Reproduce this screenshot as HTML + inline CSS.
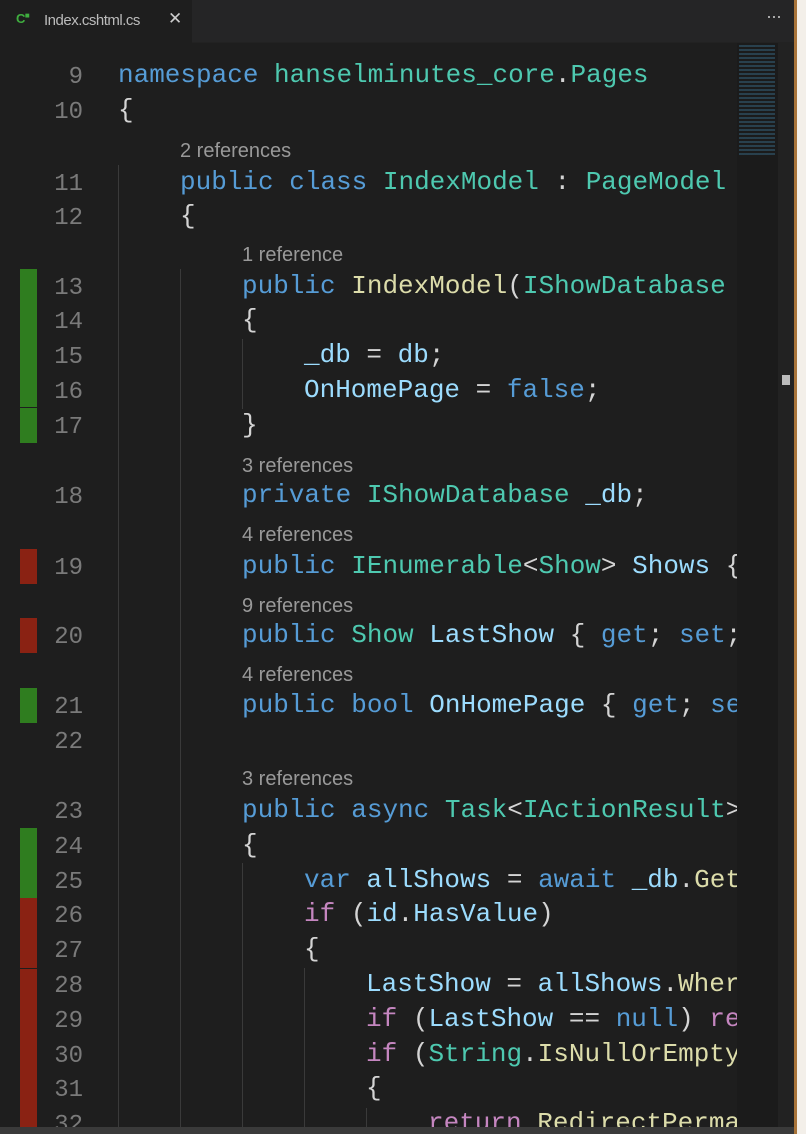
<!DOCTYPE html>
<html><head><meta charset="utf-8"><style>
*{margin:0;padding:0;box-sizing:border-box}
body{width:806px;height:1134px;background:#f3efe9;overflow:hidden;position:relative}
#ed{position:absolute;left:0;top:0;width:794px;height:1134px;background:#1e1e1e;overflow:hidden}
#bord{position:absolute;left:794px;top:0;width:3px;height:1134px;background:#a8743a}
#tabs{position:absolute;left:0;top:0;width:794px;height:43px;background:#252526;border-bottom:1px solid #222}
#tab{position:absolute;left:0;top:0;width:192px;height:43px;background:#1e1e1e;font:15px "Liberation Sans",sans-serif;color:#bbb;letter-spacing:-0.5px}
.l{position:absolute;height:35px;line-height:35px;font:26px "Liberation Mono",monospace;color:#d4d4d4;white-space:pre}
.n{position:absolute;width:83px;text-align:right;color:#7a7a7a;font:24px "Liberation Mono",monospace;height:35px;line-height:35px;left:0}
.c{position:absolute;font:20px "Liberation Sans",sans-serif;color:#999;height:30px;line-height:30px}
.k{color:#569cd6}.t{color:#4ec9b0}.m{color:#dcdcaa}.v{color:#9cdcfe}.p{color:#c586c0}
.g{position:absolute;width:1px;background:#3a3a3a}
.bar{position:absolute;left:20px;width:17px}
#code{position:absolute;left:0;top:43px;width:737px;height:1084px;overflow:hidden}
#mm{position:absolute;left:737px;top:43px;width:41px;height:1084px;background:#1b1b1b}
#sb{position:absolute;left:778px;top:43px;width:16px;height:1084px;background:#222}
#bot{position:absolute;left:0;top:1127px;width:794px;height:7px;background:#3a3a3a}
</style></head><body>
<div id="ed">
<div id="tabs"><div id="tab">
<span style="position:absolute;left:16px;top:11px;color:#3fae3f;font:bold 13px 'Liberation Sans',sans-serif">C<span style="font-size:8px;vertical-align:top">■</span></span>
<span style="position:absolute;left:44px;top:12px">Index.cshtml.cs</span>
<span style="position:absolute;left:168px;top:9px;color:#ccc;font-size:17px">✕</span>
</div>
<span style="position:absolute;left:766px;top:6px;color:#bbb;font:18px 'Liberation Sans',sans-serif;letter-spacing:-1px">···</span>
</div>
<div id="code">
<div class="bar" style="top:226px;height:138px;background:#2f7d1f"></div>
<div class="bar" style="top:365px;height:35px;background:#2f7d1f"></div>
<div class="bar" style="top:506px;height:35px;background:#8a2213"></div>
<div class="bar" style="top:575px;height:35px;background:#8a2213"></div>
<div class="bar" style="top:645px;height:35px;background:#2f7d1f"></div>
<div class="bar" style="top:785px;height:70px;background:#2f7d1f"></div>
<div class="bar" style="top:855px;height:70px;background:#8a2213"></div>
<div class="bar" style="top:926px;height:170px;background:#8a2213"></div>
<div class="g" style="left:118px;top:122px;height:1000px"></div>
<div class="g" style="left:180px;top:226px;height:900px"></div>
<div class="g" style="left:242px;top:296px;height:70px"></div>
<div class="g" style="left:242px;top:820px;height:300px"></div>
<div class="g" style="left:304px;top:925px;height:200px"></div>
<div class="g" style="left:366px;top:1065px;height:60px"></div>
</div>
<div id="lines" style="position:absolute;left:0;top:2px;width:737px;height:1125px;overflow:hidden">
<div class="n" style="top:58px">9</div><div class="l" style="left:118px;top:58px"><span class="k">namespace</span> <span class="t">hanselminutes_core</span>.<span class="t">Pages</span></div>
<div class="n" style="top:93px">10</div><div class="l" style="left:118px;top:93px">{</div>
<div class="c" style="left:180px;top:134px">2 references</div>
<div class="n" style="top:165px">11</div><div class="l" style="left:180px;top:165px"><span class="k">public</span> <span class="k">class</span> <span class="t">IndexModel</span> : <span class="t">PageModel</span></div>
<div class="n" style="top:199px">12</div><div class="l" style="left:180px;top:199px">{</div>
<div class="c" style="left:242px;top:238px">1 reference</div>
<div class="n" style="top:269px">13</div><div class="l" style="left:242px;top:269px"><span class="k">public</span> <span class="m">IndexModel</span>(<span class="t">IShowDatabase</span> db)</div>
<div class="n" style="top:303px">14</div><div class="l" style="left:242px;top:303px">{</div>
<div class="n" style="top:338px">15</div><div class="l" style="left:304px;top:338px"><span class="v">_db</span> = <span class="v">db</span>;</div>
<div class="n" style="top:373px">16</div><div class="l" style="left:304px;top:373px"><span class="v">OnHomePage</span> = <span class="k">false</span>;</div>
<div class="n" style="top:408px">17</div><div class="l" style="left:242px;top:408px">}</div>
<div class="c" style="left:242px;top:449px">3 references</div>
<div class="n" style="top:478px">18</div><div class="l" style="left:242px;top:478px"><span class="k">private</span> <span class="t">IShowDatabase</span> <span class="v">_db</span>;</div>
<div class="c" style="left:242px;top:518px">4 references</div>
<div class="n" style="top:549px">19</div><div class="l" style="left:242px;top:549px"><span class="k">public</span> <span class="t">IEnumerable</span>&lt;<span class="t">Show</span>&gt; <span class="v">Shows</span> { <span class="k">get</span>; }</div>
<div class="c" style="left:242px;top:589px">9 references</div>
<div class="n" style="top:618px">20</div><div class="l" style="left:242px;top:618px"><span class="k">public</span> <span class="t">Show</span> <span class="v">LastShow</span> { <span class="k">get</span>; <span class="k">set</span>; }</div>
<div class="c" style="left:242px;top:658px">4 references</div>
<div class="n" style="top:688px">21</div><div class="l" style="left:242px;top:688px"><span class="k">public</span> <span class="k">bool</span> <span class="v">OnHomePage</span> { <span class="k">get</span>; <span class="k">set</span>; }</div>
<div class="n" style="top:723px">22</div>
<div class="c" style="left:242px;top:762px">3 references</div>
<div class="n" style="top:793px">23</div><div class="l" style="left:242px;top:793px"><span class="k">public</span> <span class="k">async</span> <span class="t">Task</span>&lt;<span class="t">IActionResult</span>&gt;</div>
<div class="n" style="top:828px">24</div><div class="l" style="left:242px;top:828px">{</div>
<div class="n" style="top:863px">25</div><div class="l" style="left:304px;top:863px"><span class="k">var</span> <span class="v">allShows</span> = <span class="k">await</span> <span class="v">_db</span>.<span class="m">GetShows</span></div>
<div class="n" style="top:897px">26</div><div class="l" style="left:304px;top:897px"><span class="p">if</span> (<span class="v">id</span>.<span class="v">HasValue</span>)</div>
<div class="n" style="top:932px">27</div><div class="l" style="left:304px;top:932px">{</div>
<div class="n" style="top:967px">28</div><div class="l" style="left:366px;top:967px"><span class="v">LastShow</span> = <span class="v">allShows</span>.<span class="m">Where</span></div>
<div class="n" style="top:1002px">29</div><div class="l" style="left:366px;top:1002px"><span class="p">if</span> (<span class="v">LastShow</span> == <span class="k">null</span>) <span class="p">return</span></div>
<div class="n" style="top:1037px">30</div><div class="l" style="left:366px;top:1037px"><span class="p">if</span> (<span class="t">String</span>.<span class="m">IsNullOrEmpty</span></div>
<div class="n" style="top:1071px">31</div><div class="l" style="left:366px;top:1071px">{</div>
<div class="n" style="top:1106px">32</div><div class="l" style="left:428px;top:1106px"><span class="p">return</span> <span class="m">RedirectPerma</span></div>
</div>
<div id="mm">
<div style="position:absolute;left:2px;top:2px;width:36px;height:110px;background:repeating-linear-gradient(#2c4a5a 0 2px,#1b1b1b 2px 4px);opacity:.8"></div>
</div>
<div id="sb"><div style="position:absolute;left:4px;top:332px;width:8px;height:10px;background:#bbb"></div></div>
<div id="bot"></div>
</div>
<div id="bord"></div>
</body></html>
